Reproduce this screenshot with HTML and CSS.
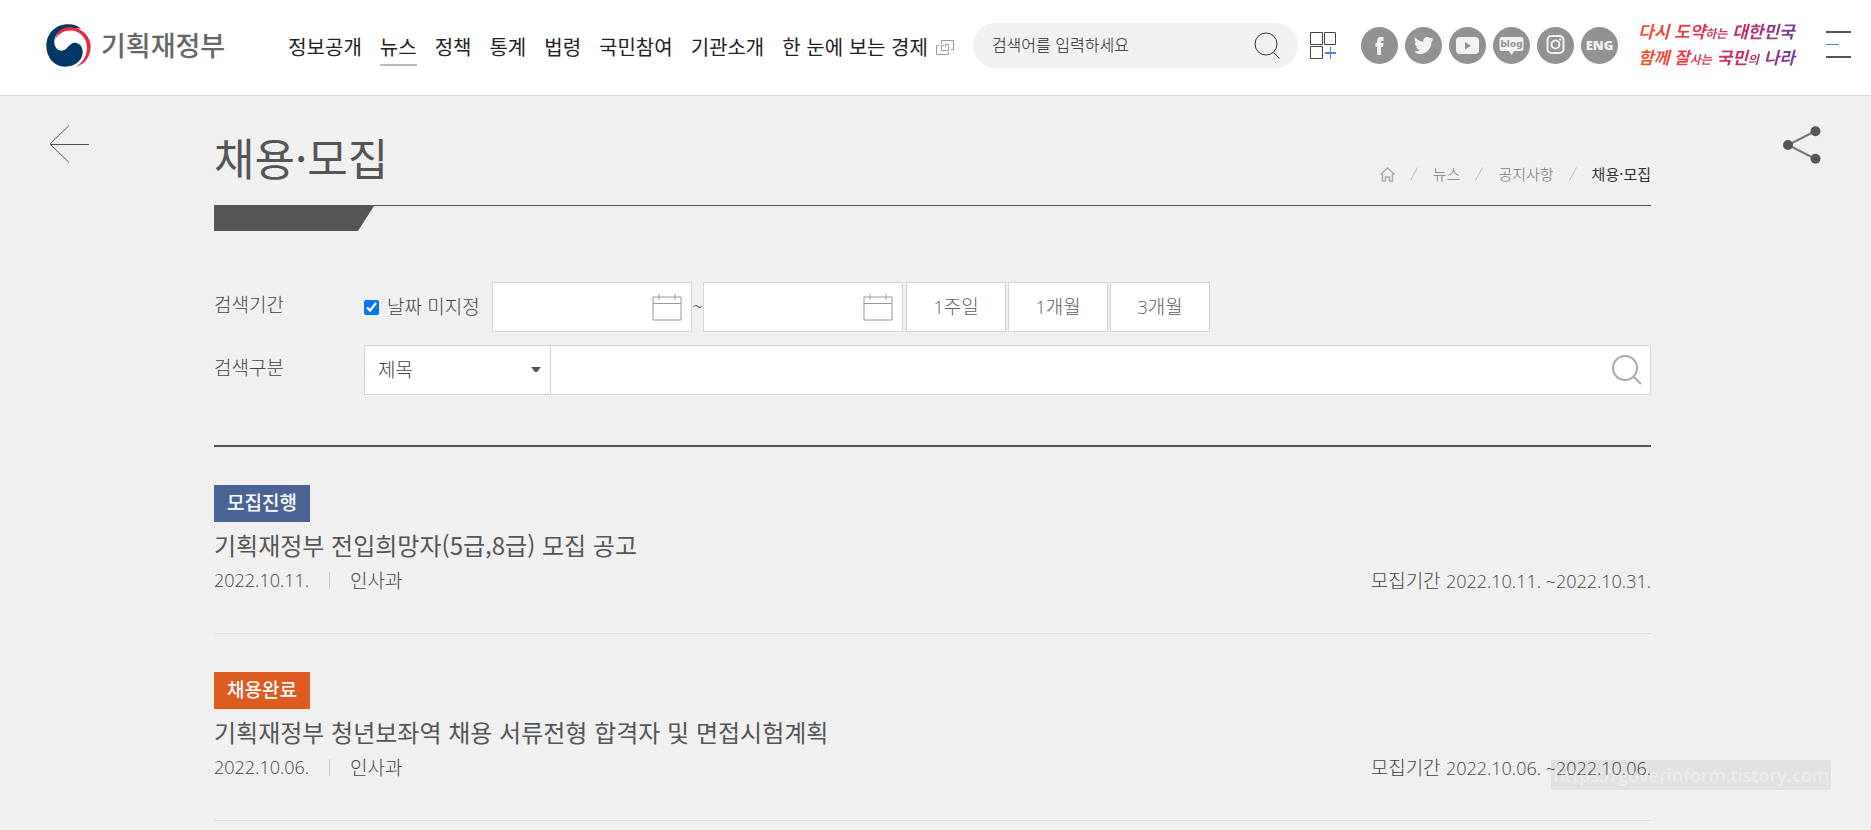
FILE: index.html
```html
<!DOCTYPE html>
<html lang="ko">
<head>
<meta charset="utf-8">
<title>채용·모집 | 기획재정부</title>
<link rel="stylesheet" href="styles.css">
</head>
<body>
<header class="site-header">
  <a class="logo" href="#">
    <svg class="logo-mark" viewBox="0 0 136 130" aria-hidden="true">
      <path fill="#003764" d="M106 14C92 2 78 0 66 1C28 1 1 30 1 66C1 102 26 129 58 129C90 129 111 108 111 84C111 68 100 57 87 57C70 57 64 81 47 81C33 81 25 68 25 54C25 30 46 12 72 12C86 12 97 14 106 14Z"/>
      <path fill="#f0243f" d="M27 48C32 22 50 9 74 9C108 12 135 36 135 68C135 96 118 122 92 129C112 115 124 96 124 72C124 42 102 20 74 20C54 20 36 30 27 48Z"/>
    </svg>
    <span class="logo-text">기획재정부</span>
  </a>
  <nav class="main-nav">
    <a href="#">정보공개</a>
    <a class="is-current" href="#">뉴스</a>
    <a href="#">정책</a>
    <a href="#">통계</a>
    <a href="#">법령</a>
    <a href="#">국민참여</a>
    <a href="#">기관소개</a>
    <a class="external" href="#">한 눈에 보는 경제
      <svg width="18" height="15" viewBox="0 0 18 15" fill="none" stroke="#999" aria-hidden="true"><path d="M3.500 5.500H.5V14.500H12.500V11.500M8 5.500H5.500V10.500H12.500V4.500H9M5.500 4V.5H17.500V9.500H15M9.500 7.500V4.500"/></svg>
    </a>
  </nav>
  <form class="site-search">
    <input type="text" aria-label="통합검색" placeholder="검색어를 입력하세요">
    <button type="button" aria-label="검색">
      <svg width="26" height="27" viewBox="0 0 26 27" fill="none" stroke="#333" aria-hidden="true"><circle cx="12" cy="12" r="11"/><path d="M19.500 20.500L25.500 26.500"/></svg>
    </button>
  </form>
  <button class="icon-button quick" type="button" aria-label="바로가기 추가">
    <svg width="26" height="27" viewBox="0 0 26 27" fill="none" stroke="#444" aria-hidden="true"><path d="M.5.5H12.500V12.500H.5ZM14.500.5H25.500V12.500H14.500ZM.5 14.500H12.500V26.500H.5Z"/><path stroke="#4a86d8" d="M20.500 15V27"/><path stroke="#4a86d8" stroke-width="2" d="M15 21H26"/></svg>
  </button>
  <div class="social">
    <a href="#" aria-label="페이스북"><svg viewBox="0 0 37 37"><path d="M16 28V20H14.500V16H16V14C16 11.200 17.500 10 20 10H22.500V14H21C20.200 14 20 14.400 20 15V16H22.500L22 20H20V28Z"/></svg></a>
    <a href="#" aria-label="트위터"><svg viewBox="0 0 37 37"><path d="M9 24.500C11.500 24.700 13.500 24 15 22.800C13 22.700 11.600 21.500 11.200 19.800H12.800C10.800 19 9.700 17.500 9.700 15.500L11.300 16C9.500 14.400 9.200 12.300 10.200 10.600C12.300 13.200 15.200 14.600 18.300 14.700C17.800 12 19.900 10 22.300 10C23.700 10 24.800 10.600 25.500 11.300L28 10.200C27.700 11.300 27.200 12 26.400 12.500L28.600 12C28.100 12.900 27.500 13.500 26.700 14.100C26.900 21.500 21.500 27 15 27C12.800 27 10.700 26 9 24.500Z"/></svg></a>
    <a href="#" aria-label="유튜브"><svg viewBox="0 0 37 37"><rect x="7" y="10" width="23" height="17" rx="4"/><path class="ink" d="M16 15V22.500L22 18.700Z"/></svg></a>
    <a href="#" aria-label="블로그"><svg viewBox="0 0 37 37"><path d="M9 10H28Q30.500 10 30.500 12.500V21.500Q30.500 24 28 24H21L18.500 28L16 24H9Q6.500 24 6.500 21.500V12.500Q6.500 10 9 10Z"/><text class="ink blog" x="18.500" y="20" text-anchor="middle">blog</text></svg></a>
    <a href="#" aria-label="인스타그램"><svg viewBox="0 0 37 37"><g class="line"><rect x="10.500" y="9" width="16" height="17" rx="4"/><circle cx="18.500" cy="17.500" r="4"/></g><circle cx="23.300" cy="12.500" r="1.200"/></svg></a>
    <a class="eng" href="#">ENG</a>
  </div>
  <p class="slogan"><span>다시 도약<small>하는</small> 대한민국</span><span>함께 잘<small>사는</small> 국민<small>의</small> 나라</span></p>
  <button class="icon-button menu" type="button" aria-label="전체메뉴">
    <svg width="25" height="28" viewBox="0 0 25 28" aria-hidden="true"><path fill="#555" d="M0 0H25V2H0ZM0 25H25V27H0Z"/><path fill="#4a86d8" d="M0 13H13V14H0Z"/></svg>
  </button>
</header>

<main class="page">
  <a class="back" href="#" aria-label="이전">
    <svg width="40" height="38" viewBox="0 0 40 38" fill="none" stroke="#555" aria-hidden="true"><path d="M1 19.500H40M20 .5L1 19L20 37.500"/></svg>
  </a>
  <button class="icon-button share" type="button" aria-label="공유">
    <svg width="38" height="38" viewBox="0 0 38 38" aria-hidden="true"><path fill="none" stroke="#777" stroke-width="2" d="M32.500 5L5 19L32.500 33"/><g fill="#555"><circle cx="5" cy="19" r="5"/><circle cx="32.500" cy="5.200" r="5"/><circle cx="32.500" cy="32.800" r="5"/></g></svg>
  </button>

  <div class="page-head">
    <h1>채용·모집</h1>
    <nav class="breadcrumb" aria-label="현재 위치">
      <a class="home" href="#" aria-label="홈"><svg width="15" height="15" viewBox="0 0 15 15" fill="none" stroke="#aaa" stroke-width="1.500" aria-hidden="true"><path d="M.5 7.500L7.500 1L14.500 7.500M2.500 7V14H5.500V10H9.500V14H12.500V7"/></svg></a>
      <svg class="slash" width="8" height="14" viewBox="0 0 8 14"><path d="M.5 13.500L7.500.5"/></svg>
      <a href="#">뉴스</a>
      <svg class="slash" width="8" height="14" viewBox="0 0 8 14"><path d="M.5 13.500L7.500.5"/></svg>
      <a href="#">공지사항</a>
      <svg class="slash" width="8" height="14" viewBox="0 0 8 14"><path d="M.5 13.500L7.500.5"/></svg>
      <strong>채용·모집</strong>
    </nav>
  </div>
  <div class="head-tab"></div>

  <form class="filter">
    <div class="filter-row">
      <span class="filter-label">검색기간</span>
      <label class="no-date"><input type="checkbox" checked><span>날짜 미지정</span></label>
      <div class="date-range">
        <div class="date-box"><input type="text" aria-label="시작일"><svg width="30" height="27" viewBox="0 0 30 27" aria-hidden="true"><path d="M1 3H29V26H1ZM1 9.500H29M7 0V6M23 0V6"/></svg></div>
        <span class="tilde">~</span>
        <div class="date-box"><input type="text" aria-label="종료일"><svg width="30" height="27" viewBox="0 0 30 27" aria-hidden="true"><path d="M1 3H29V26H1ZM1 9.500H29M7 0V6M23 0V6"/></svg></div>
      </div>
      <div class="periods">
        <button type="button"><span>1</span>주일</button>
        <button type="button"><span>1</span>개월</button>
        <button type="button"><span>3</span>개월</button>
      </div>
    </div>
    <div class="filter-row">
      <label class="filter-label" for="field">검색구분</label>
      <div class="field-box">
        <select id="field"><option>제목</option></select>
        <svg width="10" height="6" viewBox="0 0 10 6" aria-hidden="true"><path fill="#555" d="M0 0H10L6 5H4Z"/></svg>
      </div>
      <div class="keyword-box">
        <input type="text" aria-label="검색어">
        <button type="button" aria-label="검색"><svg width="30" height="30" viewBox="0 0 30 30" fill="none" stroke="#aaa" stroke-width="2" aria-hidden="true"><circle cx="13" cy="13" r="12"/><path d="M22 22L29 29"/></svg></button>
      </div>
    </div>
  </form>

  <ul class="notices">
    <li>
      <span class="badge badge-open">모집진행</span>
      <h2><a href="#">기획재정부 전입희망자(5급,8급) 모집 공고</a></h2>
      <div class="meta">
        <time>2022.10.11.</time><span class="dept">인사과</span>
        <span class="term">모집기간 <span class="num">2022.10.11. ~2022.10.31.</span></span>
      </div>
    </li>
    <li>
      <span class="badge badge-done">채용완료</span>
      <h2><a href="#">기획재정부 청년보좌역 채용 서류전형 합격자 및 면접시험계획</a></h2>
      <div class="meta">
        <time>2022.10.06.</time><span class="dept">인사과</span>
        <span class="term">모집기간 <span class="num">2022.10.06. ~2022.10.06.</span></span>
      </div>
    </li>
  </ul>
  <span class="watermark">https://goverinform.tistory.com</span>
</main>
</body>
</html>
```
FILE: styles.css
```css
* { box-sizing: border-box; }

body {
  margin: 0;
  background: #f0f0f0;
  color: #555;
  font-family: "Noto Sans CJK KR", sans-serif;
  font-size: 19px;
  font-weight: 300;
}

a { color: inherit; text-decoration: none; }
svg { display: block; }
input, button, select { font: inherit; color: inherit; border: 0; padding: 0; background: none; outline: 0; }
button { cursor: pointer; }

.site-header {
  display: flex;
  align-items: center;
  height: 96px;
  padding: 0 20px 5px 46px;
  border-bottom: 1px solid #ddd;
  background: #fff;
}

.logo { display: flex; align-items: center; gap: 10px; }
.logo-mark { width: 45px; height: 43px; }
.logo-text { color: #666; font-size: 27px; font-weight: 500; line-height: 40px; }

.main-nav { display: flex; gap: 18px; margin-left: 63px; color: #222; font-size: 20px; font-weight: 400; white-space: nowrap; }
.main-nav a { padding: 7px 0 1px; line-height: 32px; border-bottom: 2px solid transparent; }
.main-nav .is-current { border-bottom-color: #bbb; }
.main-nav .external { display: flex; align-items: center; gap: 8px; }

.site-search {
  display: flex;
  flex: 1;
  align-items: center;
  height: 45px;
  margin-left: 19px;
  padding: 0 18px 0 19px;
  border-radius: 23px;
  background: #f1f1f1;
}
.site-search input { flex: 1; min-width: 0; padding-bottom: 2px; font-size: 16px; }
.site-search input::placeholder { color: #222; opacity: 1; }

.icon-button { display: block; }
.quick { margin-left: 12px; }

.social { display: flex; gap: 7px; margin-left: 25px; }
.social a { width: 37px; height: 37px; border-radius: 50%; background: #929292; }
.social svg { fill: #f2f2f2; }
.social .ink { fill: #929292; }
.social .blog { font: 700 9px "DejaVu Sans", sans-serif; }
.social .line { fill: none; stroke: #f2f2f2; stroke-width: 2; }
.social .eng { color: #f2f2f2; font: 800 13px/37px "Open Sans", sans-serif; text-align: center; }

.slogan {
  display: flex;
  flex-direction: column;
  width: 163px;
  margin: 0 0 0 20px;
  background: linear-gradient(90deg, #f8532c, #e53a4c 35%, #c22b6c 65%, #67449a);
  background-clip: text;
  color: transparent;
  font-size: 17px;
  font-weight: 700;
  font-style: italic;
  line-height: 24px;
  white-space: nowrap;
}
.slogan small { font-size: 12px; }
.menu { margin-left: 25px; }

.page { position: relative; padding: 38px 220px 0 214px; }
.back { position: absolute; left: 49px; top: 29px; }
.share { position: absolute; right: 50px; top: 30px; }

.page-head { display: flex; align-items: flex-end; justify-content: space-between; padding-bottom: 21px; border-bottom: 1px solid #555; }
h1 { margin: 0; padding-bottom: 4px; font-size: 44px; font-weight: 400; line-height: 46px; }
.breadcrumb { display: flex; align-items: center; gap: 15px; color: #777; font-size: 15px; line-height: 20px; }
.breadcrumb strong { color: #333; font-weight: 400; }
.slash { fill: none; stroke: #bbb; }
.head-tab { width: 160px; height: 25px; background: #555; clip-path: polygon(0 0, 100% 0, 90% 100%, 0 100%); }

.filter { display: grid; gap: 13px; padding: 51px 0 50px; border-bottom: 2px solid #555; color: #444; }
.filter-row { display: flex; height: 50px; }
.filter-label { width: 150px; line-height: 44px; }
.no-date { display: flex; align-items: center; gap: 8px; width: 128px; white-space: nowrap; }
.no-date span { padding-bottom: 4px; }
.no-date input { width: 15px; height: 15px; margin: 0; }
.date-range { display: flex; }
.date-box { display: flex; align-items: center; width: 200px; padding: 0 9px; border: 1px solid #d5d5d5; background: #fff; }
.date-box input { flex: 1; min-width: 0; }
.date-box svg { fill: none; stroke: #999; stroke-width: 1; }
.tilde { width: 11px; font-size: 18px; line-height: 46px; text-align: center; }
.periods { display: flex; gap: 2px; margin-left: 3px; }
.periods button { width: 100px; padding-bottom: 4px; border: 1px solid #d5d5d5; background: #fff; color: #5a6068; }
.periods span, time, .num { font-family: "Open Sans", sans-serif; font-size: 18px; }
.field-box { position: relative; width: 187px; }
.field-box select { width: 100%; height: 100%; padding: 0 13px 3px; border: 1px solid #d5d5d5; background: #fff; appearance: none; }
.field-box svg { position: absolute; right: 10px; top: 22px; }
.keyword-box { display: flex; flex: 1; align-items: center; padding-right: 8px; border: 1px solid #d5d5d5; border-left: 0; background: #fff; }
.keyword-box input { flex: 1; height: 100%; padding: 0 12px; }

.notices { margin: 0; padding: 0; list-style: none; }
.notices li { padding: 38px 0 41px; border-bottom: 1px solid #ddd; }
.badge { display: block; width: fit-content; padding: 0 13px 4px; color: #fff; font-weight: 500; line-height: 33px; }
.badge-open { background: #4a6496; }
.badge-done { background: #dd5a20; }
h2 { margin: 6px 0; font-size: 24px; font-weight: 400; line-height: 34px; }
.meta { display: flex; align-items: center; height: 24px; color: #444; line-height: 24px; }
.dept { display: flex; align-items: center; gap: 20px; margin-left: 20px; }
.dept::before { content: ""; width: 1px; height: 17px; background: #ccc; }
.term { margin-left: auto; }

.watermark {
  position: absolute;
  right: 40px;
  bottom: 31px;
  padding: 0 2px;
  background: rgba(0, 0, 0, 0.06);
  color: rgba(255, 255, 255, 0.35);
  font: 600 18px/30px "Open Sans", sans-serif;
}
```
